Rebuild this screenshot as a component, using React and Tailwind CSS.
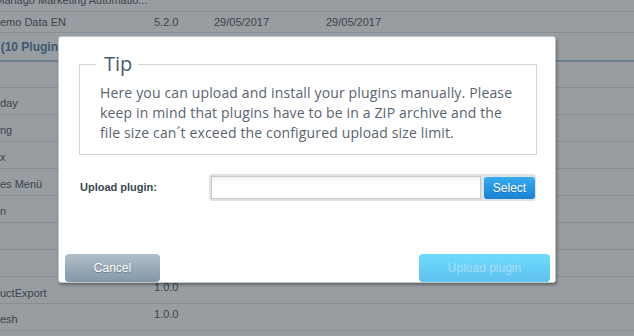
import React from "react";

const sans = { fontFamily: '"Liberation Sans", Arial, sans-serif' };

function Row({ h, name, version, date1, date2, className = "", nameClass = "", versionClass = "" }) {
  return (
    <div className={`flex items-center border-b border-[#878d92] box-border ${h} ${className}`}>
      <div className={`w-[154px] shrink-0 whitespace-nowrap overflow-hidden ${nameClass}`}>{name}</div>
      <div className={`w-[60px] shrink-0 ${versionClass}`}>{version}</div>
      <div className="w-[112px] shrink-0">{date1}</div>
      <div className="w-[112px] shrink-0">{date2}</div>
    </div>
  );
}

export default function App() {
  return (
    <div
      className="relative w-[634px] h-[336px] overflow-hidden bg-[#979da1] text-[11px] text-[#3d444b]"
      style={sans}
    >
      {/* page behind the dialog */}
      <div className="flex flex-col">
        <div className="h-[12px] flex items-end pb-[3px] overflow-hidden border-b border-[#878d92] box-border">
          <span className="-ml-[6px] whitespace-nowrap">Dianago Marketing Automatio...</span>
        </div>
        <Row h="h-[21px]" name={<span className="-ml-[8px]">Demo Data EN</span>} version="5.2.0" date1="29/05/2017" date2="29/05/2017" />
        <div className="h-[29px] flex items-center border-b-2 border-[#6d7f91] box-border font-bold text-[12px] text-[#3e5873] pt-[1px]">
          <span className="-ml-[6px] whitespace-nowrap">l (10 Plugins)</span>
        </div>
        <Row h="h-[26px]" name="" />
        <Row h="h-[27px]" name="day" nameClass="pt-[4px]" />
        <Row h="h-[27px]" name="ng" nameClass="pt-[4px]" />
        <Row h="h-[27px]" name="x" nameClass="pt-[4px]" />
        <Row h="h-[27px]" name="es Menü" nameClass="pt-[4px]" />
        <Row h="h-[27px]" name="n" nameClass="pt-[4px]" />
        <Row h="h-[27px]" name="" />
        <Row h="h-[27px]" name="" />
        <Row h="h-[27px]" name="uctExport" version="1.0.0" nameClass="pt-[6px]" versionClass="-mt-[6px]" />
        <Row h="h-[27px]" name="esh" version="1.0.0" nameClass="pt-[4px]" versionClass="-mt-[6px]" />
        <Row h="h-[27px]" name="" />
      </div>

      {/* dialog */}
      <div className="absolute left-[58px] top-[36px] w-[498px] h-[247px] flex flex-col bg-white border border-[#c3c7ca] rounded-[3px] box-border shadow-[1px_2px_3px_rgba(0,0,0,0.35)]">
        <fieldset
          className="ml-[20px] mt-[14px] w-[458px] border border-[#d2d6da] px-[20px] pb-[11px]"
          style={{ fontFamily: '"Open Sans", sans-serif' }}
        >
          <legend className="-ml-[4px] pl-[8px] pr-[6px] text-[20px] leading-[26px] text-[#4b5b6c]">Tip</legend>
          <p className="mt-[6px] whitespace-nowrap text-[14px] tracking-[0.15px] leading-[20px] text-[#5a6370]">
            Here you can upload and install your plugins manually. Please
            <br />
            keep in mind that plugins have to be in a ZIP archive and the
            <br />
            file size can´t exceed the configured upload size limit.
          </p>
        </fieldset>

        <div className="mt-[19px] ml-[21px] flex items-center">
          <label className="w-[129px] font-bold text-[11px] text-[#3b4753]">Upload plugin:</label>
          <div className="w-[327px] h-[27px] flex items-center gap-[3px] pl-[2px] pr-[1px] bg-[#dfe3e6] rounded-[3px]">
            <div className="w-[270px] h-[23px] border border-[#c4c9cc] bg-gradient-to-b from-[#f1f2f3] to-white to-[35%]" />
            <button className="w-[51px] h-[22px] rounded-[3px] bg-gradient-to-b from-[#37abef] to-[#1981d2] text-white text-[12px] [text-shadow:0_1px_0_rgba(0,0,0,0.2)]">
              Select
            </button>
          </div>
        </div>

        <div className="mt-auto flex justify-between pl-[6px] pr-[5px]">
          <button className="w-[95px] h-[28px] rounded-[4px] bg-gradient-to-b from-[#b1bec8] to-[#8398a9] text-white text-[12px] [text-shadow:0_1px_1px_rgba(0,0,0,0.3)]">
            Cancel
          </button>
          <button className="w-[131px] h-[28px] rounded-[4px] bg-gradient-to-b from-[#6fdcfd] to-[#5ec1ee] text-[#a9dcf3] text-[12px]">
            Upload plugin
          </button>
        </div>
      </div>
    </div>
  );
}
